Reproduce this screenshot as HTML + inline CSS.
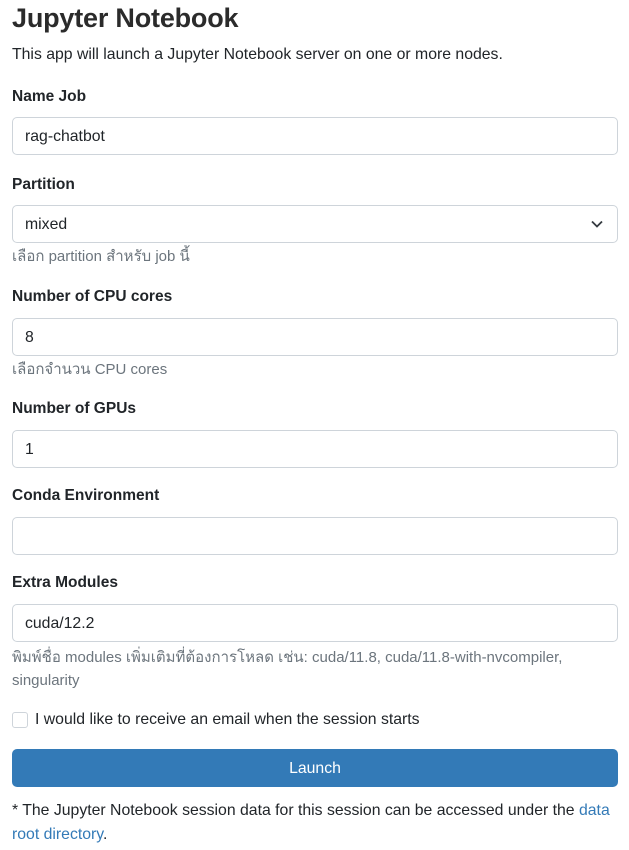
<!DOCTYPE html>
<html><head><meta charset="utf-8"><style>
body{margin:0;background:#fff;font-family:"Liberation Sans","Noto Sans CJK SC",sans-serif;color:#212529;font-size:15.8px;}
.a{position:absolute;white-space:nowrap;}
.t{left:12px;top:0;font-size:27px;font-weight:bold;line-height:36px;letter-spacing:-0.2px;color:#2b2b2b}
.lbl{left:12px;font-weight:bold;font-size:15.5px;line-height:22px}
.in{left:12px;width:604px;height:36px;border:1px solid #ced4da;border-radius:5px;box-sizing:content-box}
.in span{position:absolute;left:12px;top:9px;font-size:15.8px;line-height:20px}
.h{left:12px;color:#6c757d;font-size:15px;line-height:22px}
</style></head><body>
<div class="a t">Jupyter Notebook</div>
<div class="a" style="left:12px;top:44px;line-height:22px">This app will launch a Jupyter Notebook server on one or more nodes.</div>

<div class="a lbl" style="top:86px">Name Job</div>
<div class="a in" style="top:117px"><span>rag-chatbot</span></div>

<div class="a lbl" style="top:174px">Partition</div>
<div class="a in" style="top:205px"><span>mixed</span>
<svg style="position:absolute;right:14px;top:13px" width="12" height="10" viewBox="0 0 12 10"><path d="M1 2.5l5 5 5-5" fill="none" stroke="#343a40" stroke-width="1.8"/></svg></div>
<div class="a h" style="top:246px">เลือก partition สำหรับ job นี้</div>

<div class="a lbl" style="top:286px">Number of CPU cores</div>
<div class="a in" style="top:318px"><span>8</span></div>
<div class="a h" style="top:359px">เลือกจำนวน CPU cores</div>

<div class="a lbl" style="top:398px">Number of GPUs</div>
<div class="a in" style="top:430px"><span>1</span></div>

<div class="a lbl" style="top:485px">Conda Environment</div>
<div class="a in" style="top:517px"></div>

<div class="a lbl" style="top:572px">Extra Modules</div>
<div class="a in" style="top:604px"><span>cuda/12.2</span></div>
<div class="a h" style="top:647px">พิมพ์ชื่อ modules เพิ่มเติมที่ต้องการโหลด เช่น: cuda/11.8, cuda/11.8-with-nvcompiler,</div>
<div class="a h" style="top:670px">singularity</div>

<div class="a" style="left:12px;top:712px;width:14px;height:14px;border:1px solid #ced4da;border-radius:3px"></div>
<div class="a" style="left:35px;top:709px;line-height:22px">I would like to receive an email when the session starts</div>

<div class="a" style="left:12px;top:749px;width:606px;height:38px;background:#337ab7;border-radius:5px;color:#fff;text-align:center;line-height:40px">Launch</div>

<div class="a" style="left:12px;top:799px;line-height:24px">* The Jupyter Notebook session data for this session can be accessed under the <span style="color:#337ab7">data</span></div>
<div class="a" style="left:12px;top:823px;line-height:24px"><span style="color:#337ab7">root directory</span>.</div>
</body></html>
